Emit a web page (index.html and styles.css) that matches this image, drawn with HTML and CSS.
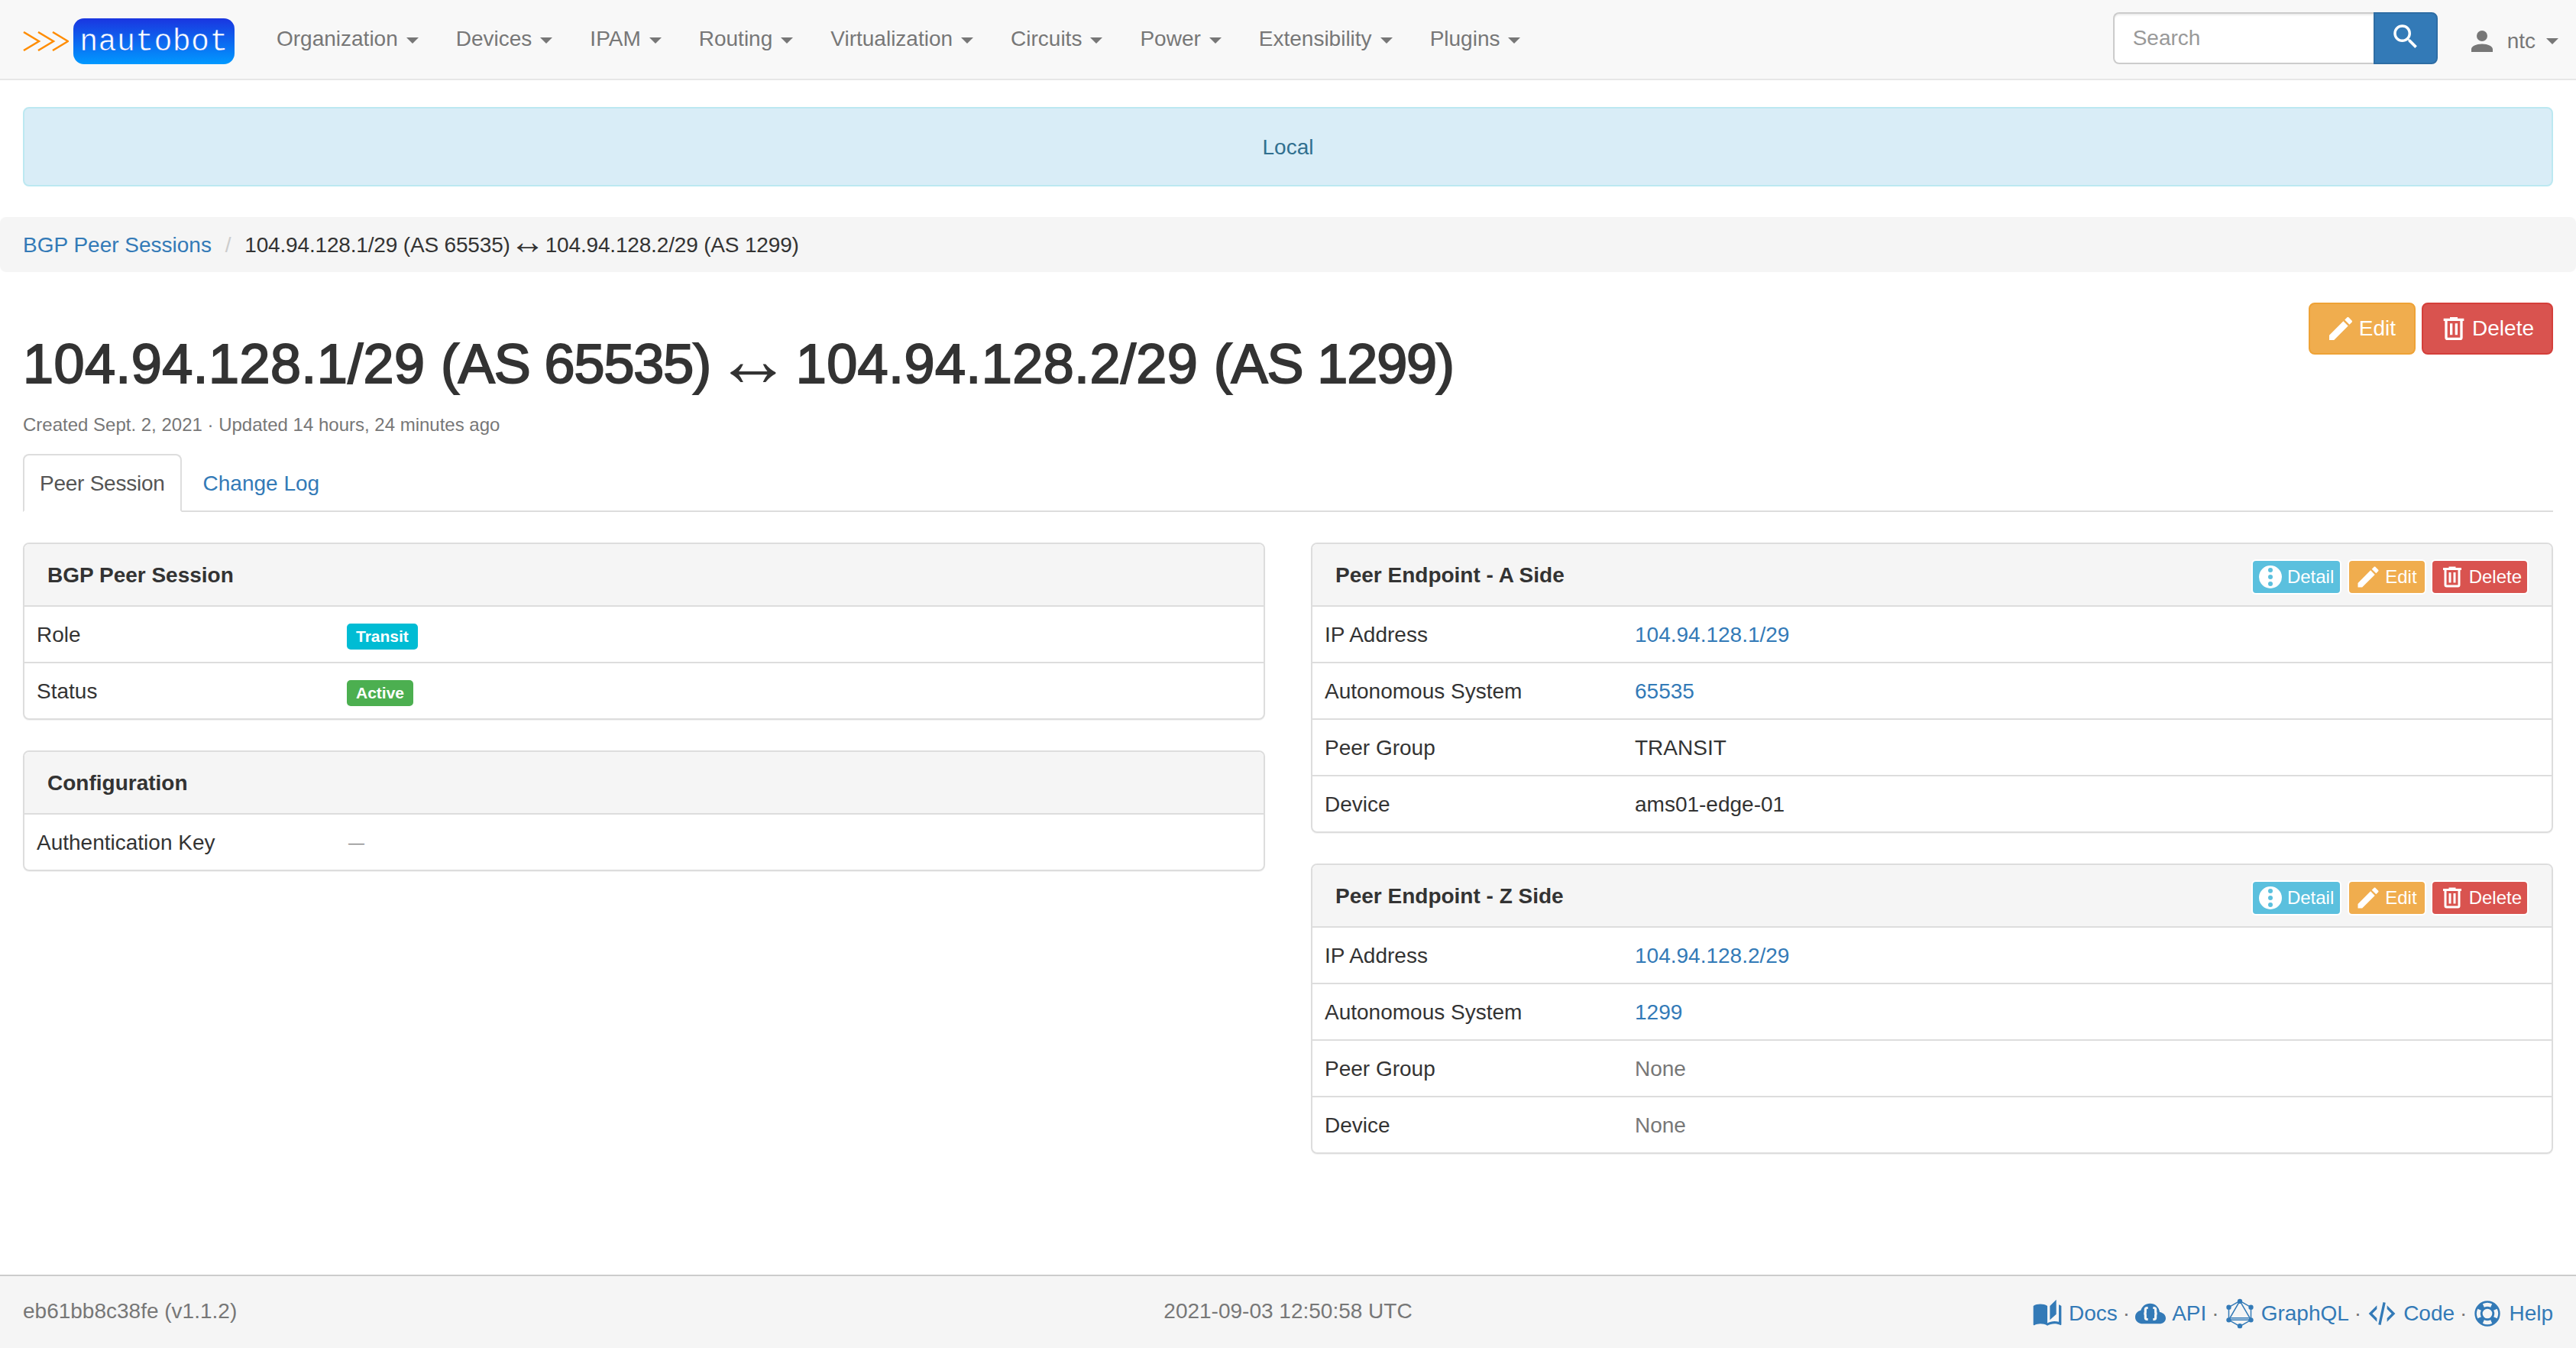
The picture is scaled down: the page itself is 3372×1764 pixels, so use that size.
FILE: index.html
```html
<!DOCTYPE html>
<html lang="en">
<head>
    <meta charset="UTF-8">
    <title>Nautobot</title>
    <link rel="stylesheet" href="styles.css">
</head>
<body>

<svg class="icon-defs" width="0" height="0">
    <symbol id="i-magnify" viewBox="0 0 24 24"><path d="M9.5,3A6.5,6.5 0 0,1 16,9.5C16,11.11 15.41,12.59 14.44,13.73L14.71,14H15.5L20.5,19L19,20.5L14,15.5V14.71L13.73,14.44C12.59,15.41 11.11,16 9.5,16A6.5,6.5 0 0,1 3,9.5A6.5,6.5 0 0,1 9.5,3M9.5,5C7,5 5,7 5,9.5C5,12 7,14 9.5,14C12,14 14,12 14,9.5C14,7 12,5 9.5,5Z"/></symbol>
    <symbol id="i-account" viewBox="0 0 24 24"><path d="M12,4A4,4 0 0,1 16,8A4,4 0 0,1 12,12A4,4 0 0,1 8,8A4,4 0 0,1 12,4M12,14C16.42,14 20,15.79 20,18V20H4V18C4,15.79 7.58,14 12,14Z"/></symbol>
    <symbol id="i-pencil" viewBox="0 0 24 24"><path d="M20.71,7.04C21.1,6.65 21.1,6 20.71,5.63L18.37,3.29C18,2.9 17.35,2.9 16.96,3.29L15.12,5.12L18.87,8.87M3,17.25V21H6.75L17.81,9.93L14.06,6.18L3,17.25Z"/></symbol>
    <symbol id="i-trash" viewBox="0 0 24 24"><path d="M9,3V4H4V6H5V19A2,2 0 0,0 7,21H17A2,2 0 0,0 19,19V6H20V4H15V3H9M7,6H17V19H7V6M9,8V17H11V8H9M13,8V17H15V8H13Z"/></symbol>
    <symbol id="i-dots" viewBox="0 0 24 24"><path fill-rule="evenodd" d="M12,2A10,10 0 0,1 22,12A10,10 0 0,1 12,22A10,10 0 0,1 2,12A10,10 0 0,1 12,2M12,4A2,2 0 0,0 10,6A2,2 0 0,0 12,8A2,2 0 0,0 14,6A2,2 0 0,0 12,4M12,10A2,2 0 0,0 10,12A2,2 0 0,0 12,14A2,2 0 0,0 14,12A2,2 0 0,0 12,10M12,16A2,2 0 0,0 10,18A2,2 0 0,0 12,20A2,2 0 0,0 14,18A2,2 0 0,0 12,16Z"/></symbol>
    <symbol id="i-book" viewBox="0 0 24 24"><path d="M19 1L14 6V17L19 12.5V1M21 5V18.5C19.9 18.15 18.7 18 17.5 18C15.8 18 13.35 18.65 12 19.5V6C10.55 4.9 8.45 4.5 6.5 4.5C4.55 4.5 2.45 4.9 1 6V20.65C1 20.9 1.25 21.15 1.5 21.15C1.6 21.15 1.65 21.1 1.75 21.1C3.1 20.45 5.05 20 6.5 20C8.45 20 10.55 20.4 12 21.5C13.35 20.65 15.8 20 17.5 20C19.15 20 20.85 20.3 22.25 21.05C22.35 21.1 22.4 21.1 22.5 21.1C22.75 21.1 23 20.85 23 20.6V6C22.4 5.55 21.75 5.25 21 5Z"/></symbol>
    <symbol id="i-cloud" viewBox="0 0 24 24">
        <path d="M6 20C2.800 20 0 18 0 14.800C0 12 1.900 10 4.400 9.500C5.300 6.300 8 4 11.600 4C15.800 4 18.800 6.900 19.200 10.800C21.800 11.200 24 13 24 15.600C24 18.200 21.800 20 18.900 20Z"/>
        <path class="cloud-cut" d="M10 7.500H9.300C8.500 7.500 8 8 8 8.800V11C8 11.700 7.500 12 6.800 12C7.500 12 8 12.300 8 13V15.200C8 16 8.500 16.500 9.300 16.500H10M14 7.500H14.700C15.500 7.500 16 8 16 8.800V11C16 11.700 16.500 12 17.200 12C16.500 12 16 12.300 16 13V15.200C16 16 15.500 16.500 14.700 16.500H14"/>
    </symbol>
    <symbol id="i-graphql" viewBox="0 0 24 24">
        <path class="graph-line" d="M12 2L20.700 7V17L12 22L3.300 17V7ZM12 2L20.700 17H3.300ZM5 15.500H19"/>
        <circle cx="12" cy="2.300" r="1.900"/><circle cx="20.700" cy="7" r="1.900"/><circle cx="20.700" cy="17" r="1.900"/>
        <circle cx="12" cy="21.700" r="1.900"/><circle cx="3.300" cy="17" r="1.900"/><circle cx="3.300" cy="7" r="1.900"/>
    </symbol>
    <symbol id="i-xml" viewBox="0 0 24 24"><path d="M12.89,3L14.85,3.4L11.11,21L9.15,20.6L12.89,3M19.59,12L16,8.41V5.58L22.42,12L16,18.41V15.58L19.59,12M1.58,12L8,5.58V8.41L4.41,12L8,15.58V18.41L1.58,12Z"/></symbol>
    <symbol id="i-lifebuoy" viewBox="0 0 24 24"><path fill-rule="evenodd" d="M12,2A10,10 0 1,1 12,22A10,10 0 1,1 12,2M12,8.200A3.800,3.800 0 1,0 12,15.800A3.800,3.800 0 1,0 12,8.200M8.300,4.400A8.400,8.400 0 0,1 15.700,4.400L14.500,7.100A5.500,5.500 0 0,0 9.500,7.100ZM19.600,8.300A8.400,8.400 0 0,1 19.600,15.700L16.900,14.500A5.500,5.500 0 0,0 16.900,9.500ZM15.700,19.600A8.400,8.400 0 0,1 8.300,19.600L9.500,16.900A5.500,5.500 0 0,0 14.500,16.900ZM4.400,15.700A8.400,8.400 0 0,1 4.400,8.300L7.100,9.500A5.500,5.500 0 0,0 7.100,14.500Z"/></symbol>
</svg>

<nav class="navbar">
    <a class="brand" href="#">
        <svg class="brand-arrows" viewBox="0 0 60 26"><path d="M1 1L21 13L1 25M20 1L40 13L20 25M39 1L59 13L39 25"/></svg>
        <span class="brand-box">nautobot</span>
    </a>
    <ul class="nav-menu">
        <li><a href="#">Organization<span class="caret"></span></a></li>
        <li><a href="#">Devices<span class="caret"></span></a></li>
        <li><a href="#">IPAM<span class="caret"></span></a></li>
        <li><a href="#">Routing<span class="caret"></span></a></li>
        <li><a href="#">Virtualization<span class="caret"></span></a></li>
        <li><a href="#">Circuits<span class="caret"></span></a></li>
        <li><a href="#">Power<span class="caret"></span></a></li>
        <li><a href="#">Extensibility<span class="caret"></span></a></li>
        <li><a href="#">Plugins<span class="caret"></span></a></li>
    </ul>
    <form class="nav-search">
        <input type="text" placeholder="Search">
        <button type="button"><svg class="icon-search"><use href="#i-magnify"/></svg></button>
    </form>
    <a class="nav-user" href="#">
        <svg class="icon-user"><use href="#i-account"/></svg>ntc<span class="caret"></span>
    </a>
</nav>

<div class="alert">Local</div>

<div class="breadcrumb">
    <a href="#">BGP Peer Sessions</a>
    <span class="crumb-sep">/</span>
    <span class="crumb-current">104.94.128.1/29 (AS 65535)<span class="arrow"> ↔ </span>104.94.128.2/29 (AS 1299)</span>
</div>

<main class="content">
    <div class="page-head">
        <div>
            <h1>104.94.128.1/29 <span class="asn">(AS 65535)</span><span class="arrow"> ↔ </span>104.94.128.2/29 <span class="asn">(AS 1299)</span></h1>
            <p class="meta">Created Sept. 2, 2021 · Updated 14 hours, 24 minutes ago</p>
        </div>
        <div class="btn-group">
            <a class="btn btn-edit" href="#"><svg class="icon"><use href="#i-pencil"/></svg>Edit</a>
            <a class="btn btn-delete" href="#"><svg class="icon"><use href="#i-trash"/></svg>Delete</a>
        </div>
    </div>

    <ul class="tabs">
        <li class="active"><a href="#">Peer Session</a></li>
        <li><a href="#">Change Log</a></li>
    </ul>

    <div class="columns">
        <div>
            <div class="panel">
                <div class="panel-heading">BGP Peer Session</div>
                <div class="row"><div class="row-label">Role</div><div><span class="label label-transit">Transit</span></div></div>
                <div class="row"><div class="row-label">Status</div><div><span class="label label-active">Active</span></div></div>
            </div>
            <div class="panel">
                <div class="panel-heading">Configuration</div>
                <div class="row"><div class="row-label">Authentication Key</div><div class="muted dash">—</div></div>
            </div>
        </div>
        <div>
            <div class="panel">
                <div class="panel-heading">
                    Peer Endpoint - A Side
                    <div class="btn-group-xs">
                        <a class="btn-xs btn-detail" href="#"><svg class="icon-xs"><use href="#i-dots"/></svg>Detail</a>
                        <a class="btn-xs btn-edit" href="#"><svg class="icon-xs"><use href="#i-pencil"/></svg>Edit</a>
                        <a class="btn-xs btn-delete" href="#"><svg class="icon-xs"><use href="#i-trash"/></svg>Delete</a>
                    </div>
                </div>
                <div class="row"><div class="row-label">IP Address</div><div><a href="#">104.94.128.1/29</a></div></div>
                <div class="row"><div class="row-label">Autonomous System</div><div><a href="#">65535</a></div></div>
                <div class="row"><div class="row-label">Peer Group</div><div>TRANSIT</div></div>
                <div class="row"><div class="row-label">Device</div><div>ams01-edge-01</div></div>
            </div>
            <div class="panel">
                <div class="panel-heading">
                    Peer Endpoint - Z Side
                    <div class="btn-group-xs">
                        <a class="btn-xs btn-detail" href="#"><svg class="icon-xs"><use href="#i-dots"/></svg>Detail</a>
                        <a class="btn-xs btn-edit" href="#"><svg class="icon-xs"><use href="#i-pencil"/></svg>Edit</a>
                        <a class="btn-xs btn-delete" href="#"><svg class="icon-xs"><use href="#i-trash"/></svg>Delete</a>
                    </div>
                </div>
                <div class="row"><div class="row-label">IP Address</div><div><a href="#">104.94.128.2/29</a></div></div>
                <div class="row"><div class="row-label">Autonomous System</div><div><a href="#">1299</a></div></div>
                <div class="row"><div class="row-label">Peer Group</div><div class="muted">None</div></div>
                <div class="row"><div class="row-label">Device</div><div class="muted">None</div></div>
            </div>
        </div>
    </div>
</main>

<footer class="footer">
    <div>eb61bb8c38fe (v1.1.2)</div>
    <div class="footer-time">2021-09-03 12:50:58 UTC</div>
    <div class="footer-links">
        <a href="#"><svg class="icon-foot"><use href="#i-book"/></svg>Docs</a><span class="dot">·</span>
        <a href="#"><svg class="icon-foot"><use href="#i-cloud"/></svg>API</a><span class="dot">·</span>
        <a href="#"><svg class="icon-foot"><use href="#i-graphql"/></svg>GraphQL</a><span class="dot">·</span>
        <a href="#"><svg class="icon-foot"><use href="#i-xml"/></svg>Code</a><span class="dot">·</span>
        <a href="#"><svg class="icon-foot"><use href="#i-lifebuoy"/></svg>Help</a>
    </div>
</footer>

</body>
</html>
```

FILE: styles.css
```css
* {
    box-sizing: border-box;
}

body {
    font-family: "Liberation Sans", Arial, sans-serif;
    font-size: 28px;
    line-height: 40px;
    color: #333;
    background-color: #fff;
    margin: 0;
    min-height: 100vh;
    display: flex;
    flex-direction: column;
}

a {
    color: #337ab7;
    text-decoration: none;
}

svg {
    fill: currentColor;
}

.icon-defs {
    position: absolute;
}

/* top bar */
.navbar {
    height: 105px;
    background-color: #f8f8f8;
    border-bottom: 2px solid #e7e7e7;
    display: flex;
    padding-left: 30px;
}

.brand {
    display: flex;
    align-items: center;
    height: 60px;
    margin-top: 24px;
}

.brand-arrows {
    width: 60px;
    height: 26px;
    margin-right: 6px;
    fill: none;
    stroke: #ff8c00;
    stroke-width: 2.5;
}

.brand-box {
    width: 211px;
    height: 60px;
    line-height: 64px;
    text-align: center;
    border-radius: 14px;
    background: linear-gradient(to bottom, #1a35e0, #0099ff);
    color: #fff;
    font-family: "Liberation Mono", monospace;
    font-size: 40px;
    letter-spacing: 0.3px;
    -webkit-text-stroke: 0.6px #0d62ef;
}

.nav-menu {
    list-style: none;
    display: flex;
    margin: 0 0 0 31px;
    padding: 0;
}

.nav-menu a {
    display: block;
    padding: 31px 25px 29px 24px;
    color: #777;
}

.caret {
    display: inline-block;
    width: 0;
    height: 0;
    margin-left: 11px;
    vertical-align: middle;
    border-top: 8px solid #777;
    border-left: 8px solid transparent;
    border-right: 8px solid transparent;
}

.nav-search {
    display: flex;
    margin: 16px 0 0 auto;
    height: 68px;
}

.nav-search input {
    width: 341px;
    height: 68px;
    padding: 0 24px;
    font: inherit;
    color: #555;
    background-color: #fff;
    border: 2px solid #ccc;
    border-right: none;
    border-radius: 8px 0 0 8px;
    box-shadow: inset 0 2px 2px rgba(0,0,0,0.075);
    outline: none;
}

.nav-search input::placeholder {
    color: #999;
}

.nav-search button {
    width: 84px;
    height: 68px;
    padding: 0;
    color: #fff;
    background-color: #337ab7;
    border: 2px solid #2e6da4;
    border-radius: 0 8px 8px 0;
}

.icon-search {
    width: 42px;
    height: 42px;
    display: block;
    margin: -4px auto 0;
}

.nav-user {
    display: flex;
    align-items: center;
    height: 40px;
    margin: 34px 23px 0 37px;
    color: #777;
}

.nav-user .caret {
    margin-left: 14px;
}

.icon-user {
    width: 42px;
    height: 42px;
    margin-right: 12px;
}

/* banner and breadcrumb */
.alert {
    margin: 35px 30px 0;
    padding: 31px 30px 29px;
    text-align: center;
    color: #31708f;
    background-color: #d9edf7;
    border: 2px solid #bce8f1;
    border-radius: 8px;
}

.breadcrumb {
    margin-top: 40px;
    padding: 17px 30px 15px;
    background-color: #f5f5f5;
    border-radius: 8px;
}

.crumb-sep {
    color: #ccc;
    padding: 0 10px;
}

.crumb-current {
    letter-spacing: -0.17px;
}

.arrow {
    font-size: 100px;
    line-height: 0;
    word-spacing: -22px;
    letter-spacing: 0;
    vertical-align: -4px;
    -webkit-text-stroke: 0;
}

.crumb-current .arrow {
    font-size: 46px;
    word-spacing: -12.8px;
    vertical-align: -2px;
}

.content {
    padding: 0 30px;
    flex: 1;
}

/* page header */
.page-head {
    display: flex;
    justify-content: space-between;
    align-items: flex-start;
    margin-top: 40px;
}

h1 {
    margin: 41px 0 0;
    font-size: 72px;
    line-height: 79px;
    font-weight: normal;
    letter-spacing: 0.4px;
    -webkit-text-stroke: 2px #333;
}

.asn {
    letter-spacing: -1.1px;
}

.meta {
    margin: 23px 0 0;
    font-size: 24px;
    line-height: 34px;
    color: #777;
}

.btn-group {
    display: flex;
    gap: 8px;
}

.btn {
    display: flex;
    align-items: center;
    height: 68px;
    padding: 0 24px 0 20px;
    color: #fff;
    border: 2px solid;
    border-radius: 8px;
}

.btn.btn-delete {
    padding-right: 23px;
}

.icon {
    width: 40px;
    height: 40px;
    margin-right: 4px;
}

.btn-edit {
    background-color: #f0ad4e;
    border-color: #eea236;
}

.btn-delete {
    background-color: #d9534f;
    border-color: #d43f3a;
}

.btn-detail {
    background-color: #5bc0de;
    border-color: #46b8da;
}

/* tabs */
.tabs {
    list-style: none;
    display: flex;
    gap: 6px;
    margin: 21px 0 0;
    padding: 0;
    height: 76px;
    border-bottom: 2px solid #ddd;
}

.tabs a {
    display: block;
    padding: 17px 20px;
    height: 76px;
    border: 2px solid transparent;
    border-radius: 8px 8px 0 0;
}

.tabs .active a {
    color: #555;
    background-color: #fff;
    border-color: #ddd #ddd #fff;
    letter-spacing: -0.25px;
}

/* panels */
.columns {
    display: grid;
    grid-template-columns: 1626px 1626px;
    gap: 60px;
    margin-top: 40px;
}

.panel {
    margin-bottom: 40px;
    border: 2px solid #ddd;
    border-radius: 8px;
    box-shadow: 0 1px 1px rgba(0,0,0,0.05);
}

.panel-heading {
    display: flex;
    justify-content: space-between;
    align-items: center;
    height: 82px;
    padding: 2px 30px 0;
    font-weight: bold;
    background-color: #f5f5f5;
    border-bottom: 2px solid #ddd;
    border-radius: 6px 6px 0 0;
}

.row {
    display: grid;
    grid-template-columns: 406px 1fr;
    height: 74px;
    padding: 17px 16px 15px;
    border-top: 2px solid #ddd;
}

.panel-heading + .row {
    height: 72px;
    border-top: none;
}

.row-label {
    padding-right: 16px;
}

.muted {
    color: #777;
}

.dash {
    font-size: 21px;
    padding-left: 2px;
}

.label {
    display: inline-block;
    height: 34px;
    padding: 0 12px;
    font-size: 21px;
    line-height: 33px;
    font-weight: bold;
    color: #fff;
    border-radius: 5px;
    vertical-align: middle;
}

.label-transit {
    background-color: #00bcd4;
}

.label-active {
    background-color: #4caf50;
}

.btn-group-xs {
    display: flex;
    gap: 8px;
    margin-top: 4px;
}

.btn-xs {
    display: flex;
    align-items: center;
    height: 46px;
    padding: 0 8px 0 5px;
    font-size: 24px;
    font-weight: normal;
    color: #fff;
    border: 2px solid;
    border-radius: 6px;
}

.btn-xs.btn-edit {
    padding: 0 10px 0 7px;
}

.btn-xs.btn-delete {
    margin-left: -2px;
    padding: 0 7px 0 8px;
}

.icon-xs {
    width: 36px;
    height: 36px;
    margin-right: 4px;
}

/* footer */
.footer {
    display: grid;
    grid-template-columns: 1fr auto 1fr;
    align-items: center;
    height: 96px;
    padding: 0 30px 2px;
    color: #777;
    background-color: #f5f5f5;
    border-top: 2px solid #ccc;
}

.footer-links {
    display: flex;
    justify-content: flex-end;
    align-items: center;
    margin-top: 5px;
}

.footer-links a {
    display: flex;
    align-items: center;
}

.icon-foot {
    width: 40px;
    height: 40px;
    margin-right: 8px;
}

.dot {
    padding: 0 7px;
}

.cloud-cut {
    fill: none;
    stroke: #f5f5f5;
    stroke-width: 1.9;
}

.graph-line {
    fill: none;
    stroke: currentColor;
    stroke-width: 0.9;
}
```
